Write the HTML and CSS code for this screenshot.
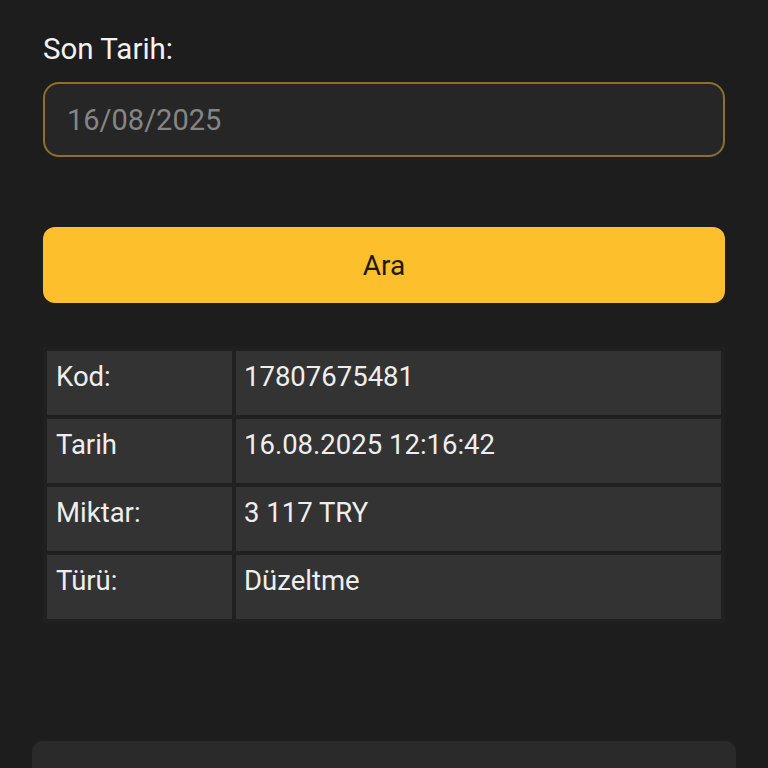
FILE: index.html
```html
<!DOCTYPE html>
<html lang="tr">
<head>
<meta charset="utf-8">
<title>Son Tarih</title>
<link rel="stylesheet" href="styles.css">
</head>
<body>
<main class="page">
  <section class="form">
    <label class="label" for="end-date">Son Tarih:</label>
    <div class="input" id="end-date">16/08/2025</div>
    <button class="btn" type="button">Ara</button>
  </section>
  <div class="details">
    <div class="cell key">Kod:</div><div class="cell val">17807675481</div>
    <div class="cell key">Tarih</div><div class="cell val">16.08.2025 12:16:42</div>
    <div class="cell key">Miktar:</div><div class="cell val">3 117 TRY</div>
    <div class="cell key">Türü:</div><div class="cell val">Düzeltme</div>
  </div>
  <div class="card"></div>
</main>
</body>
</html>
```
FILE: styles.css
```css
* { box-sizing: border-box; }
html, body {
  margin: 0;
  padding: 0;
  background: #1d1d1d;
  height: 768px;
  overflow: hidden;
}
body {
  font-family: Roboto, "Liberation Sans", sans-serif;
  color: #ececec;
}
.page {
  display: flex;
  flex-direction: column;
  align-items: center;
}
.form {
  width: 682px;
  display: flex;
  flex-direction: column;
  padding-top: 32px;
}
.label {
  font-size: 29.5px;
  line-height: 34px;
  color: #f2f2f2;
}
.input {
  margin-top: 16px;
  height: 75px;
  border: 2px solid #8c7030;
  border-radius: 16px;
  background: #262626;
  color: #858585;
  font-size: 29px;
  display: flex;
  align-items: center;
  padding-left: 22px;
}
.btn {
  margin-top: 70px;
  height: 76px;
  border: none;
  border-radius: 12px;
  background: #fdbf2b;
  color: #1c1a14;
  font-family: Roboto, "Liberation Sans", sans-serif;
  font-size: 28px;
  padding: 0;
}
.details {
  width: 682px;
  margin-top: 44px;
  padding: 4px;
  display: grid;
  grid-template-columns: 185px 1fr;
  grid-auto-rows: 64px;
  gap: 4px;
  background: #202020;
}
.cell {
  background: #333333;
  font-size: 27.5px;
  line-height: 31px;
  padding: 10px 8px 0 9px;
  color: #eeeeee;
}
.val { padding-left: 8px; }
.card {
  margin-top: 118px;
  width: 704px;
  height: 60px;
  background: #2a2a2a;
  border-radius: 10px;
}
```
